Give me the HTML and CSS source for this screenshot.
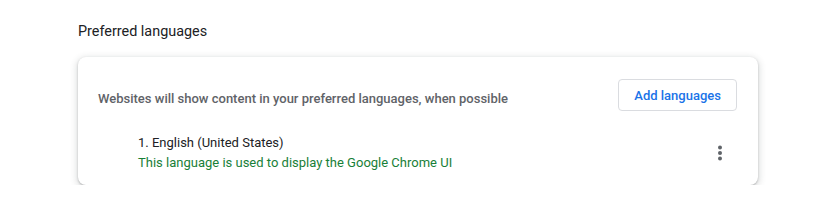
FILE: index.html
```html
<!DOCTYPE html>
<html lang="en">
<head>
    <meta charset="UTF-8">
    <title>Languages</title>
    <link rel="stylesheet" href="styles.css">
</head>
<body>
    <div class="page">
        <h2 class="section-title">Preferred languages</h2>
        <div class="card">
            <div class="row">
                <span class="row-label">Websites will show content in your preferred languages, when possible</span>
                <button class="add-button">Add languages</button>
            </div>
            <div class="lang-item">
                <div class="lang-text">
                    <div class="lang-name">1. English (United States)</div>
                    <div class="lang-note">This language is used to display the Google Chrome UI</div>
                </div>
                <button class="menu-button" aria-label="More actions">
                    <svg width="20" height="20" viewBox="0 0 20 20">
                        <circle cx="10" cy="4.5" r="2" fill="#5f6368"/>
                        <circle cx="10" cy="10" r="2" fill="#5f6368"/>
                        <circle cx="10" cy="15.5" r="2" fill="#5f6368"/>
                    </svg>
                </button>
            </div>
        </div>
    </div>
</body>
</html>
```

FILE: styles.css
```css
* {
    margin: 0;
    padding: 0;
    box-sizing: border-box;
}
body {
    background: #fff;
    font-family: Roboto, "Noto Sans", Arial, sans-serif;
    font-size: 13px;
    color: #202124;
}
.page {
    padding: 22px 0 0 78px;
}
.section-title {
    font-size: 14.4px;
    font-weight: 400;
    line-height: 20px;
    color: #202124;
}
.card {
    width: 680px;
    height: 128px;
    margin-top: 15px;
    border-radius: 8px;
    background: #fff;
    box-shadow: 0 1px 2px rgba(60,64,67,0.3), 0 2px 6px 2px rgba(60,64,67,0.15);
}
.row {
    display: flex;
    align-items: center;
    justify-content: space-between;
    padding: 22px 21px 0 20px;
}
.row-label {
    font-weight: 500;
    color: #5f6368;
    line-height: 20px;
    padding-top: 8px;
}
.add-button {
    height: 32px;
    padding: 0 15px;
    background: #fff;
    border: 1px solid #dadce0;
    border-radius: 4px;
    color: #1a73e8;
    font-family: inherit;
    font-size: 13px;
    font-weight: 500;
}
.lang-item {
    display: flex;
    align-items: center;
    justify-content: space-between;
    margin-top: 22px;
    padding: 0 20px 0 60px;
}
.lang-text {
    line-height: 20px;
}
.lang-name {
    color: #202124;
}
.lang-note {
    color: #188038;
}
.menu-button {
    width: 36px;
    height: 36px;
    display: flex;
    align-items: center;
    justify-content: center;
    border: none;
    background: none;
}
```
